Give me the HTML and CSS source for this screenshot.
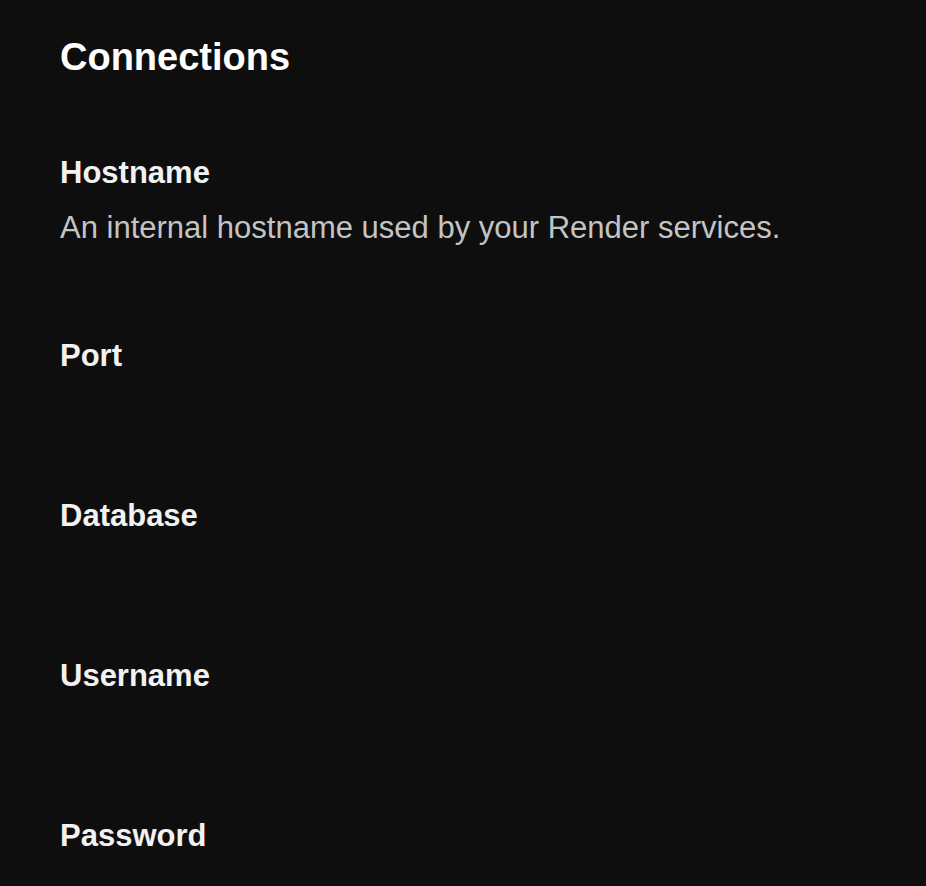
FILE: index.html
```html
<!DOCTYPE html>
<html lang="en">
<head>
    <meta charset="UTF-8">
    <meta name="viewport" content="width=device-width, initial-scale=1.0">
    <title>Connections</title>
    <link rel="stylesheet" href="styles.css">
</head>
<body>

<div class="connections">
    <h2>Connections</h2>
    <div class="field">
        <div class="field-label">Hostname</div>
        <div class="field-help">An internal hostname used by your Render services.</div>
    </div>
    <div class="field">
        <div class="field-label">Port</div>
    </div>
    <div class="field">
        <div class="field-label">Database</div>
    </div>
    <div class="field">
        <div class="field-label">Username</div>
    </div>
    <div class="field last">
        <div class="field-label">Password</div>
    </div>
</div>

</body>
</html>
```

FILE: styles.css
```css
html, body {
    margin: 0;
    background: #0e0e0e;
}
body {
    font-family: "Liberation Sans", Arial, sans-serif;
    color: #f2f2f2;
}
.connections {
    padding: 34px 60px 0 60px;
}
.connections h2 {
    margin: 0 0 73px 0;
    font-size: 38px;
    line-height: 46px;
    font-weight: bold;
    color: #ffffff;
}
.field {
    min-height: 72px;
    margin-bottom: 88px;
}
.field.last {
    min-height: 0;
    margin-bottom: 0;
}
.field-label {
    font-size: 31px;
    line-height: 40px;
    font-weight: bold;
}
.field-help {
    margin-top: 15px;
    font-size: 31px;
    line-height: 40px;
    color: #c4c4c4;
}
```
